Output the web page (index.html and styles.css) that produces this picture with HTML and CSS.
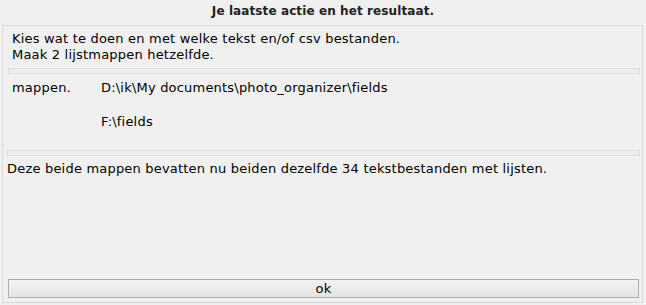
FILE: index.html
```html
<!DOCTYPE html>
<html>
<head>
    <title>Je laatste actie en het resultaat.</title>
    <link rel="stylesheet" href="styles.css">
</head>
<body>
    <div class="title">Je laatste actie en het resultaat.</div>

    <div class="panel">
        <!-- Uitleg -->
        <div class="intro">
            <div>Kies wat te doen en met welke tekst en/of csv bestanden.</div>
            <div>Maak 2 lijstmappen hetzelfde.</div>
        </div>

        <div class="separator first"></div>

        <!-- Mappen -->
        <div class="folders">
            <div class="folder-row">
                <span class="label">mappen.</span>
                <span class="path">D:\ik\My documents\photo_organizer\fields</span>
            </div>
            <div class="folder-row">
                <span class="label"></span>
                <span class="path">F:\fields</span>
            </div>
        </div>

        <div class="separator second"></div>

        <div class="result">Deze beide mappen bevatten nu beiden dezelfde 34 tekstbestanden met lijsten.</div>

        <button class="ok-btn">ok</button>
    </div>
</body>
</html>
```

FILE: styles.css
```css
body {
    margin: 0;
    background: #f0f0f0;
    font-family: "DejaVu Sans", Verdana, sans-serif;
    font-size: 13px;
    letter-spacing: 0.2px;
    color: #000;
    height: 305px;
    overflow: hidden;
}

.title {
    height: 25px;
    line-height: 23px;
    text-align: center;
    font-weight: bold;
    font-size: 12px;
    letter-spacing: 0.1px;
    color: #222;
}

.panel {
    margin: 0 3px 0 2px;
    height: 276px;
    border: 1px solid #dadada;
    display: flex;
    flex-direction: column;
}

.intro { padding: 5px 9px 5px 9px; line-height: 16px; }

.separator {
    height: 4px;
    border: 1px solid #dcdcdc;
    background: #eeeeee;
}
.separator.first { margin: 0 2px 0 5px; }
.separator.second { margin: 0 2px 0 4px; }

.folders { padding: 6px 9px 20px 9px; display: flex; flex-direction: column; gap: 18px; line-height: 16px; }
.folder-row { display: flex; }
.label { width: 89px; flex-shrink: 0; }

.result { padding: 5px 4px 3px 4px; line-height: 16px; }

.ok-btn {
    margin: auto 3px 4px 5px;
    height: 19px;
    border: 1px solid #adadad;
    background: linear-gradient(#f2f2f2, #e4e4e4);
    font-family: "DejaVu Sans", Verdana, sans-serif;
    font-size: 13px;
    letter-spacing: 0.2px;
    padding: 0;
    line-height: 16px;
    color: #000;
}
```
